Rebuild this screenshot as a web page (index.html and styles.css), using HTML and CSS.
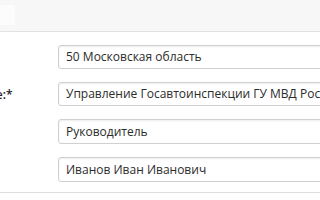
FILE: index.html
```html
<!DOCTYPE html>
<html lang="ru">
<head>
  <meta charset="UTF-8">
  <meta name="viewport" content="width=device-width, initial-scale=1.0">
  <title>Заявка</title>
  <link rel="stylesheet" href="styles.css">
</head>
<body>
  <div class="top">
    <span class="tab"></span>
  </div>
  <div class="form">
    <div class="row">
      <label>Регион:</label>
      <div class="field">50 Московская область</div>
    </div>
    <div class="row">
      <label>Подразделение:*</label>
      <div class="field">Управление Госавтоинспекции ГУ МВД России по Московской области</div>
    </div>
    <div class="row tall">
      <label>Должность:</label>
      <div class="field">Руководитель</div>
    </div>
    <div class="row tall">
      <label>ФИО:</label>
      <div class="field">Иванов Иван Иванович</div>
    </div>
  </div>
  <div class="bottom"></div>
</body>
</html>
```

FILE: styles.css
```css
html, body {
  margin: 0;
  overflow: hidden;
}
body {
  font-family: 'Open Sans', Arial, sans-serif;
  font-size: 12px;
  color: #333;
  background: #fff;
  width: 320px;
}
.top {
  height: 31px;
  background: #f7f7f7;
  border-bottom: 1px solid #e2e2e2;
}
.tab {
  display: inline-block;
  width: 15px;
  height: 20px;
  margin-top: 5px;
  background: #fcfcfc;
}
.form {
  margin-left: -93px;
  width: 570px;
  padding-top: 13px;
}
.row {
  display: grid;
  grid-template-columns: 151px 1fr;
  align-items: center;
  margin-bottom: 13px;
}
.row label {
  font-weight: 600;
  white-space: nowrap;
  color: #222;
}
.field {
  height: 22px;
  line-height: 22px;
  padding: 0 7px;
  border: 1px solid #d0d0d0;
  border-radius: 3px;
  box-shadow: inset 0 1px 2px rgba(0, 0, 0, 0.08);
  white-space: nowrap;
  overflow: hidden;
  color: #2b2b2b;
}
.tall .field {
  height: 23px;
  line-height: 23px;
}
.bottom {
  margin-top: -3px;
  border-top: 1px solid #ddd;
}
```
